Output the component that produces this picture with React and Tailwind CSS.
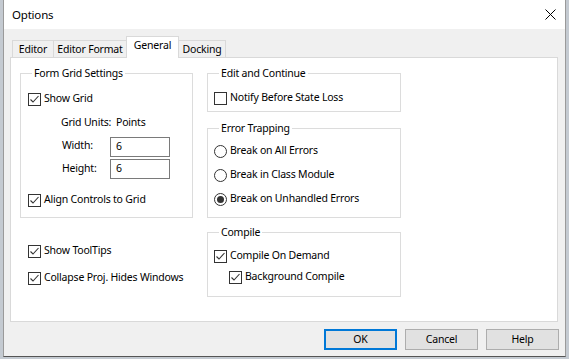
import React from 'react';

const font = "font-['Noto_Sans','Open_Sans',sans-serif] text-[10.5px] tracking-[-0.2px]";

const CheckBox = ({ checked }) => (
  <span className="w-[13px] h-[13px] border border-[#333333] bg-white flex items-center justify-center shrink-0">
    {checked && (
      <svg width="11" height="11" viewBox="0 0 11 11">
        <polyline points="1.5,5.5 4,8 9.5,2" fill="none" stroke="#333333" strokeWidth="1.1" />
      </svg>
    )}
  </span>
);

const Radio = ({ checked }) => (
  <span className="w-[13px] h-[13px] rounded-full border border-[#333333] bg-white flex items-center justify-center shrink-0">
    {checked && <span className="w-[7px] h-[7px] rounded-full bg-[#333333]" />}
  </span>
);

const CheckRow = ({ checked, label, className = '' }) => (
  <div className={'flex items-center h-[16px] gap-[3px] whitespace-nowrap ' + className}>
    <CheckBox checked={checked} />
    <span>{label}</span>
  </div>
);

const RadioRow = ({ checked, label, className = '' }) => (
  <div className={'flex items-center h-[16px] gap-[3px] whitespace-nowrap ' + className}>
    <Radio checked={checked} />
    <span>{label}</span>
  </div>
);

const Group = ({ title, className, legendClass = 'ml-[4px]', children }) => (
  <fieldset className={'border border-[#dcdcdc] ' + className}>
    <legend className={'px-[2px] leading-[16px] ' + legendClass}>{title}</legend>
    {children}
  </fieldset>
);

const Tab = ({ label, width, selected }) =>
  selected ? (
    <div className={'relative z-10 -ml-px mb-[-1px] h-[22px] bg-white border-x border-t border-[#d9d9d9] flex justify-center pt-[1px] whitespace-nowrap ' + width}>
      {label}
    </div>
  ) : (
    <div className={'-ml-px h-[17px] bg-[#f0f0f0] border-x border-t border-[#d9d9d9] flex justify-center leading-[16px] whitespace-nowrap ' + width}>
      {label}
    </div>
  );

const Button = ({ label, primary }) => (
  <button
    className={
      'w-[73px] h-[21px] bg-[#e1e1e1] flex items-center justify-center ' +
      (primary ? 'border-2 border-[#0078d7]' : 'border border-[#adadad]')
    }
  >
    {label}
  </button>
);

export default function App() {
  return (
    <div className={'w-[569px] h-[359px] bg-[#c4cad1] flex text-black ' + font}>
      <div className="ml-[3px] w-[563px] h-[357px] border-x border-b border-x-[#9a9a9a] border-b-[#555555] flex flex-col">
        <div className="h-[29px] bg-white flex items-center justify-between pl-[8px] pr-[9px]">
          <span className="text-[11.5px]">Options</span>
          <svg width="11" height="11" viewBox="0 0 11 11">
            <path d="M0.5 0.5 L10.5 10.5 M10.5 0.5 L0.5 10.5" stroke="#000" strokeWidth="1" />
          </svg>
        </div>

        <div className="flex-1 bg-[#f0f0f0] flex flex-col pt-[7px]">
          <div className="ml-[9px] h-[21px] flex items-end">
            <Tab label="Editor" width="w-[42px]" />
            <Tab label="Editor Format" width="w-[74px]" />
            <Tab label="General" width="w-[53px]" selected />
            <Tab label="Docking" width="w-[48px]" />
          </div>

          <div className="ml-[6px] w-[548px] h-[265px] bg-white border border-[#d9d9d9] flex pt-[7px] pl-[9px] gap-[14px]">
            <div className="w-[173px] flex flex-col">
              <Group title="Form Grid Settings" className="h-[153px] flex flex-col pl-[7px]">
                <CheckRow checked label="Show Grid" className="mt-[10px]" />
                <div className="flex items-center h-[16px] mt-[8px] ml-[33px]">
                  <span className="w-[55px]">Grid Units:</span>
                  <span>Points</span>
                </div>
                <div className="flex items-center mt-[6px] ml-[34px]">
                  <span className="w-[48px] -mt-[2px]">Width:</span>
                  <div className="w-[60px] h-[20px] border border-[#7a7a7a] bg-white pl-[5px] flex items-center">6</div>
                </div>
                <div className="flex items-center mt-[2px] ml-[34px]">
                  <span className="w-[48px]">Height:</span>
                  <div className="w-[60px] h-[20px] border border-[#7a7a7a] bg-white pl-[5px] flex items-center">6</div>
                </div>
                <CheckRow checked label="Align Controls to Grid" className="mt-[13px]" />
              </Group>
              <CheckRow checked label="Show ToolTips" className="mt-[25px] ml-[8px]" />
              <CheckRow checked label="Collapse Proj. Hides Windows" className="mt-[11px] ml-[8px]" />
            </div>

            <div className="w-[194px] flex flex-col">
              <Group title="Edit and Continue" legendClass="ml-[5px]" className="h-[47px] flex flex-col pl-[6px]">
                <CheckRow label="Notify Before State Loss" className="mt-[9px]" />
              </Group>
              <Group title="Error Trapping" legendClass="ml-[5px]" className="mt-[8px] h-[98px] flex flex-col pl-[6px]">
                <RadioRow label="Break on All Errors" className="mt-[7px]" />
                <RadioRow label="Break in Class Module" className="mt-[8px]" />
                <RadioRow checked label="Break on Unhandled Errors" className="mt-[8px]" />
              </Group>
              <Group title="Compile" legendClass="ml-[5px]" className="mt-[6px] h-[73px] flex flex-col pl-[6px]">
                <CheckRow checked label="Compile On Demand" className="mt-[8px]" />
                <CheckRow checked label="Background Compile" className="mt-[5px] ml-[15px]" />
              </Group>
            </div>
          </div>

          <div className="flex justify-end gap-[8px] pr-[6px] mt-[7px]">
            <Button label="OK" primary />
            <Button label="Cancel" />
            <Button label="Help" />
          </div>
        </div>
      </div>
    </div>
  );
}
